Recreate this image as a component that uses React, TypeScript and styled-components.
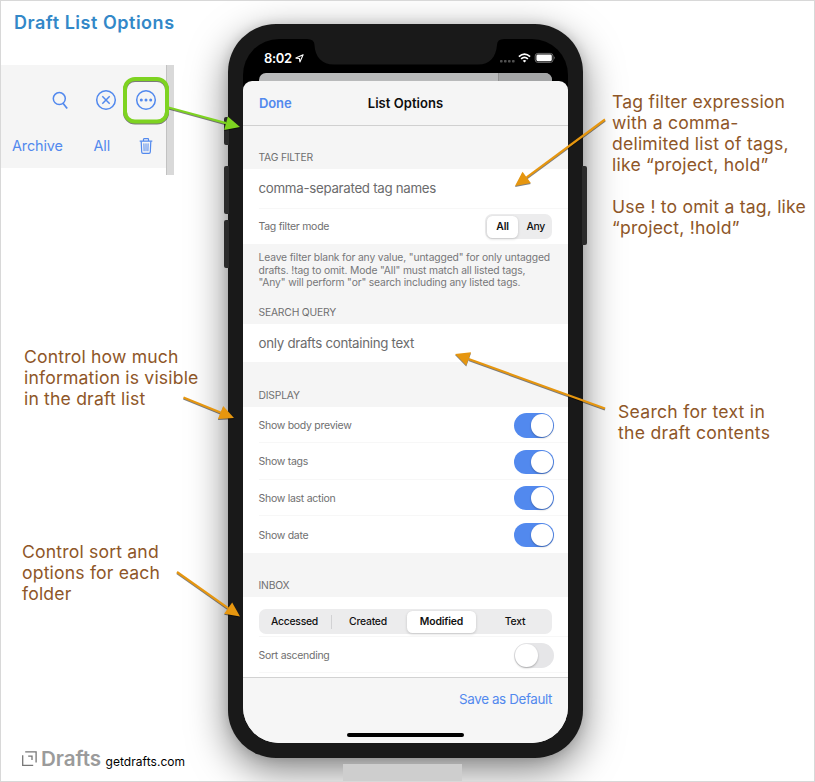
import React from "react";
import styled, { createGlobalStyle, css } from "styled-components";

const GlobalStyle = createGlobalStyle`
  *, *::before, *::after { box-sizing: border-box; }
  body { margin: 0; background: #fff; font-family: Inter, "Liberation Sans", sans-serif; }
`;

const BLUE = "#5289ee";
const ORANGE = "#e6960f";
const GREEN = "#7ed321";

const Canvas = styled.main`
  position: relative;
  display: grid;
  grid-template-columns: 227px 355px 1fr;
  width: 815px;
  height: 782px;
  overflow: hidden;
  border: 1px solid #d8d8d8;
  background: #fff;
`;

const LeftColumn = styled.section`
  display: flex;
  flex-direction: column;
  position: relative;
  z-index: 1;
`;

const RightColumn = styled.section`
  display: flex;
  flex-direction: column;
  position: relative;
  z-index: 1;
`;

const Title = styled.h1`
  margin: 10px 0 0 13px;
  font-size: 18px;
  line-height: 24px;
  font-weight: 600;
  letter-spacing: 0.52px;
  color: #3388c8;
  white-space: nowrap;
`;

const ToolbarClip = styled.div`
  display: flex;
  margin-top: 30px;
  height: 110px;
`;

const ToolbarPanel = styled.div`
  width: 165px;
  height: 103px;
  background: #f5f5f5;
`;

const ToolbarEdge = styled.div`
  width: 8px;
  background: #d9d9d9;
  border-left: 1px solid #c2c2c2;
`;

const IconRow = styled.div`
  display: flex;
  justify-content: flex-end;
  align-items: center;
  height: 70px;
  padding-right: 9px;
  gap: 18px;
`;

const SearchGlyph = styled.svg`
  margin: 1px 8px 0 0;
`;

const FilterRow = styled.div`
  display: flex;
  align-items: center;
  height: 20px;
  margin-top: 1px;
  padding-left: 11px;
  color: ${BLUE};
  font-size: 14.4px;
  line-height: 20px;
  letter-spacing: -0.1px;
`;

const FilterName = styled.span<{ $width: number }>`
  width: ${(p) => p.$width}px;
  white-space: nowrap;
`;

const Note = styled.p<{ $top: number; $left: number; $spacing?: number }>`
  margin: ${(p) => p.$top}px 0 0 ${(p) => p.$left}px;
  color: #8e5628;
  font-size: 17.6px;
  line-height: 21px;
  letter-spacing: ${(p) => p.$spacing ?? 0.17}px;
  white-space: pre;
`;

const Brand = styled.footer`
  display: flex;
  align-items: baseline;
  margin: 143px 0 0 21px;
  height: 24px;
  white-space: nowrap;
`;

const BrandName = styled.strong`
  margin-left: 4px;
  font-size: 20.6px;
  line-height: 24px;
  font-weight: 600;
  letter-spacing: -0.05px;
  color: #9b9b9b;
`;

const BrandUrl = styled.span`
  margin-left: 4.5px;
  font-size: 12px;
  letter-spacing: 0.05px;
  color: #000;
`;

const PhoneColumn = styled.section`
  position: relative;
  padding-top: 22.5px;
`;

const Phone = styled.div`
  position: relative;
  width: 355px;
  height: 734px;
  padding: 15.5px 15px 15px;
  border-radius: 48px;
  background: #191919;
  box-shadow: 0 12px 38px rgba(0, 0, 0, 0.5), 0 0 12px rgba(0, 0, 0, 0.12);
`;

const SideButton = styled.i<{ $side: "left" | "right"; $top: number; $height: number }>`
  position: absolute;
  top: ${(p) => p.$top}px;
  ${(p) => p.$side}: -4px;
  width: 5px;
  height: ${(p) => p.$height}px;
  background: #2b2b2b;
  border-radius: ${(p) => (p.$side === "left" ? "2px 0 0 2px" : "0 2px 2px 0")};
`;

const Screen = styled.div`
  display: flex;
  flex-direction: column;
  width: 325px;
  height: 703.5px;
  overflow: hidden;
  border-radius: 36px;
  background: #000;
`;

const StatusBar = styled.div`
  display: flex;
  flex: none;
  height: 34px;
  justify-content: space-between;
  align-items: flex-start;
  position: relative;
`;

const StatusTime = styled.div`
  display: flex;
  align-items: center;
  gap: 3.5px;
  height: 38px;
  padding-left: 21px;
  color: #fff;
  font-size: 13px;
  font-weight: 600;
  letter-spacing: -0.35px;
`;

const StatusIcons = styled.div`
  display: flex;
  padding: 13px 12.5px 0 0;
`;

const NotchShape = styled.svg`
  position: absolute;
  left: 64px;
  top: -1px;
`;

const BackSheet = styled.div`
  display: flex;
  flex: 0 0 8px;
  margin: 0 16px;
  border-radius: 7px 7px 0 0;
  overflow: hidden;
  background: #b9babb;
  justify-content: flex-end;
`;

const BackSheetPane = styled.div`
  width: 54px;
  background: #a4a5a6;
  border-left: 1px solid #929292;
`;

const Sheet = styled.div`
  display: flex;
  flex-direction: column;
  flex: 1;
  border-radius: 9px 9px 0 0;
  overflow: hidden;
  background: #f5f5f5;

  & > * {
    flex-shrink: 0;
  }
`;

const SheetHeader = styled.header`
  display: grid;
  grid-template-columns: 1fr auto 1fr;
  align-items: center;
  height: 45px;
  padding: 0 16px;
  border-bottom: 1px solid #d0d0d0;
`;

const DoneButton = styled.span`
  color: ${BLUE};
  font-size: 13px;
  font-weight: 600;
  letter-spacing: -0.1px;
`;

const SheetTitle = styled.span`
  color: #0d0d0d;
  font-size: 13px;
  font-weight: 600;
  letter-spacing: 0.05px;
`;

const GroupLabel = styled.div<{ $height: number; $pad?: number }>`
  display: flex;
  align-items: flex-end;
  height: ${(p) => p.$height}px;
  padding: 0 15.5px ${(p) => p.$pad ?? 5}px;
  color: #6f6f70;
  font-size: 10.3px;
  line-height: 14px;
  letter-spacing: -0.18px;
`;

const Group = styled.div`
  background: #fff;
`;

const Row = styled.div<{ $height: number; $divided?: boolean; $right?: number; $drop?: number }>`
  display: flex;
  align-items: center;
  justify-content: space-between;
  height: ${(p) => p.$height}px;
  margin-left: 15.5px;
  padding-top: ${(p) => p.$drop ?? 0}px;
  padding-right: ${(p) => p.$right ?? 14}px;
  ${(p) =>
    p.$divided &&
    css`
      border-bottom: 1px solid #f7f7f7;
    `}
`;

const RowLabel = styled.span`
  color: #6f6f70;
  font-size: 10.5px;
  letter-spacing: -0.28px;
`;

const Placeholder = styled.span`
  color: #6b6b6c;
  font-size: 13.3px;
  letter-spacing: -0.29px;
`;

const Hint = styled.p`
  margin: 0;
  height: 54.5px;
  padding: 7px 0 0 15.5px;
  color: #777779;
  font-size: 10.3px;
  line-height: 12.6px;
  letter-spacing: -0.14px;
  white-space: pre;
`;

const Segments = styled.div<{ $width: number }>`
  display: flex;
  align-items: center;
  width: ${(p) => p.$width}px;
  height: 25px;
  padding: 1.5px;
  border-radius: 7px;
  background: #ececed;
`;

const Segment = styled.span<{ $on?: boolean; $ruled?: boolean; $width: number; $shift?: number }>`
  position: relative;
  display: flex;
  width: ${(p) => p.$width}px;
  padding-left: ${(p) => Math.max(p.$shift ?? 0, 0)}px;
  padding-right: ${(p) => Math.max(-(p.$shift ?? 0), 0)}px;
  align-items: center;
  justify-content: center;
  height: 22px;
  border-radius: 5.5px;
  color: #111;
  font-size: 10.4px;
  font-weight: ${(p) => (p.$on ? 600 : 500)};
  letter-spacing: ${(p) => (p.$on ? -0.15 : -0.25)}px;
  ${(p) =>
    p.$on &&
    css`
      background: #fff;
      box-shadow: 0 1px 3px rgba(0, 0, 0, 0.18);
    `}
  ${(p) =>
    p.$ruled &&
    css`
      &::after {
        content: "";
        position: absolute;
        right: 0;
        top: 4px;
        width: 1px;
        height: 14px;
        background: #d2d2d4;
      }
    `}
`;

const Switch = styled.span<{ $on: boolean }>`
  display: flex;
  justify-content: ${(p) => (p.$on ? "flex-end" : "flex-start")};
  width: 40px;
  height: 24.5px;
  padding: 1px;
  border-radius: 13px;
  background: ${(p) => (p.$on ? BLUE : "#e6e6e8")};
`;

const Knob = styled.i`
  width: 22.5px;
  height: 22.5px;
  border-radius: 50%;
  background: #fff;
  box-shadow: 0 1px 2px rgba(0, 0, 0, 0.28);
`;

const SegmentHolder = styled.div`
  height: 39.5px;
  padding-top: 12px;
  margin-left: 15.5px;
  border-bottom: 1px solid #f7f7f7;
`;

const BottomBar = styled.footer`
  display: flex;
  flex: 1;
  flex-direction: column;
  border-top: 1px solid #d2d2d2;
  background: #f6f6f6;
`;

const SaveDefault = styled.span`
  align-self: flex-end;
  margin: 10px 16px 0 0;
  color: ${BLUE};
  font-size: 13.4px;
  line-height: 22px;
  letter-spacing: -0.38px;
`;

const HomeIndicator = styled.i`
  align-self: center;
  margin-top: 23px;
  width: 117px;
  height: 4px;
  border-radius: 2px;
  background: #000;
`;

const Stand = styled.div`
  width: 119px;
  height: 20px;
  margin: 6.5px 0 0 115px;
  position: relative;
  background: #cecece;
`;

const Overlay = styled.svg`
  position: absolute;
  left: -1px;
  top: -1px;
  z-index: 3;
  pointer-events: none;
  filter: drop-shadow(0 1px 0.7px rgba(0, 0, 0, 0.5));
`;

type Point = [number, number];

function Arrow({ from, to, color }: { from: Point; to: Point; color: string }) {
  const dx = to[0] - from[0];
  const dy = to[1] - from[1];
  const len = Math.hypot(dx, dy);
  const ux = dx / len;
  const uy = dy / len;
  const bx = to[0] - ux * 14.5;
  const by = to[1] - uy * 14.5;
  const half = 7;
  const points = [
    `${to[0]},${to[1]}`,
    `${bx - uy * half},${by + ux * half}`,
    `${bx + uy * half},${by - ux * half}`,
  ].join(" ");
  return (
    <g>
      <line x1={from[0]} y1={from[1]} x2={bx} y2={by} stroke={color} strokeWidth="2.2" />
      <polygon points={points} fill={color} />
    </g>
  );
}

const SearchIcon = () => (
  <SearchGlyph width="17" height="19" viewBox="0 0 17 19" fill="none" stroke={BLUE} strokeWidth="1.5">
    <circle cx="7.3" cy="7.6" r="6" />
    <path d="M11 12.2 L15.2 17.6" strokeWidth="1.7" />
  </SearchGlyph>
);

const ClearIcon = () => (
  <svg width="22" height="22" viewBox="0 0 22 22" fill="none" stroke={BLUE} strokeWidth="1.5">
    <circle cx="11" cy="11" r="9.3" />
    <path d="M7.3 7.3 L14.7 14.7 M14.7 7.3 L7.3 14.7" />
  </svg>
);

const MoreIcon = () => (
  <svg width="22" height="22" viewBox="0 0 22 22" fill="none" stroke={BLUE} strokeWidth="1.5">
    <circle cx="11" cy="11" r="9.3" />
    <g fill={BLUE} stroke="none">
      <circle cx="6.3" cy="11" r="1.5" />
      <circle cx="11" cy="11" r="1.5" />
      <circle cx="15.7" cy="11" r="1.5" />
    </g>
  </svg>
);

const TrashIcon = () => (
  <svg width="14" height="16" viewBox="0 0 14 16" fill="none" stroke={BLUE} strokeWidth="1.2">
    <path d="M0.7 3.2 H13.3 M4.5 3 V1.3 Q4.5 0.7 5.1 0.7 H8.9 Q9.5 0.7 9.5 1.3 V3" />
    <path d="M2.2 3.4 L2.7 14 Q2.8 15.3 4 15.3 H10 Q11.2 15.3 11.3 14 L11.8 3.4" />
    <path d="M4.9 5.4 L5.1 13.2 M7 5.4 V13.2 M9.1 5.4 L8.9 13.2" strokeWidth="1" />
  </svg>
);

const DraftsLogo = () => (
  <svg width="15" height="15" viewBox="0 0 15 15" fill="none" stroke="#777" strokeWidth="1.3">
    <path d="M0.7 4.3 V14.3 H11.2 M3.2 0.9 H14.1 V11.5" />
    <path d="M6.2 5.2 H10 V9" />
  </svg>
);

const LocationIcon = () => (
  <svg width="9" height="9" viewBox="0 0 9 9" fill="none" stroke="#fff" strokeWidth="1.1">
    <path d="M8.1 0.8 L0.9 4.1 L4.4 4.5 L4.9 8 Z" strokeLinejoin="round" />
  </svg>
);

const StatusGlyphs = () => (
  <svg width="56" height="12" viewBox="0 0 56 12" fill="none">
    <g fill="#505050">
      <rect x="0" y="8" width="2.6" height="2.4" rx="0.7" />
      <rect x="4" y="8" width="2.6" height="2.4" rx="0.7" />
      <rect x="8" y="8" width="2.6" height="2.4" rx="0.7" />
      <rect x="12" y="8" width="2.6" height="2.4" rx="0.7" />
    </g>
    <g stroke="#fff" strokeWidth="1.7">
      <path d="M18.9 4.7 Q24.5 -0.6 30.1 4.7" />
      <path d="M21.1 6.9 Q24.5 3.8 27.9 6.9" />
    </g>
    <path d="M24.5 10.6 L22.7 8.8 Q24.5 7.4 26.3 8.8 Z" fill="#fff" />
    <rect x="35.2" y="1.4" width="17.8" height="9" rx="2.6" stroke="#777" strokeWidth="0.9" />
    <rect x="36.4" y="2.6" width="15.4" height="6.6" rx="1.4" fill="#fff" />
    <path d="M54.2 4.3 Q55.6 5.9 54.2 7.5 Z" fill="#888" />
  </svg>
);

const Notch = () => (
  <NotchShape width="197" height="27" viewBox="0 0 197 27">
    <path
      d="M0 0 H197 V1 Q190 1 190 7 C189 19 183 26.6 171 26.6 H27 C15 26.6 8 19 7.5 7 Q7.5 1 0 1 Z"
      fill="#191919"
    />
  </NotchShape>
);

const DISPLAY_OPTIONS = ["Show body preview", "Show tags", "Show last action", "Show date"];

export default function App() {
  return (
    <>
      <GlobalStyle />
      <Canvas>
        <LeftColumn>
          <Title>Draft List Options</Title>
          <ToolbarClip>
            <ToolbarPanel>
              <IconRow>
                <SearchIcon />
                <ClearIcon />
                <MoreIcon />
              </IconRow>
              <FilterRow>
                <FilterName $width={81.5}>Archive</FilterName>
                <FilterName $width={45.5}>All</FilterName>
                <TrashIcon />
              </FilterRow>
            </ToolbarPanel>
            <ToolbarEdge />
          </ToolbarClip>
          <Note $top={171} $left={23}>
            {"Control how much\ninformation is visible\nin the draft list"}
          </Note>
          <Note $top={132} $left={21}>
            {"Control sort and\noptions for each\nfolder"}
          </Note>
          <Brand>
            <DraftsLogo />
            <BrandName>Drafts</BrandName>
            <BrandUrl>getdrafts.com</BrandUrl>
          </Brand>
        </LeftColumn>

        <PhoneColumn>
          <Phone>
            <SideButton $side="left" $top={93} $height={28} />
            <SideButton $side="left" $top={142.5} $height={48} />
            <SideButton $side="left" $top={196.5} $height={48} />
            <SideButton $side="right" $top={142.5} $height={79} />
            <Screen>
              <StatusBar>
                <StatusTime>
                  8:02 <LocationIcon />
                </StatusTime>
                <Notch />
                <StatusIcons>
                  <StatusGlyphs />
                </StatusIcons>
              </StatusBar>
              <BackSheet>
                <BackSheetPane />
              </BackSheet>
              <Sheet>
                <SheetHeader>
                  <DoneButton>Done</DoneButton>
                  <SheetTitle>List Options</SheetTitle>
                </SheetHeader>
                <GroupLabel $height={43}>TAG FILTER</GroupLabel>
                <Group>
                  <Row $height={39.5} $divided>
                    <Placeholder>comma-separated tag names</Placeholder>
                  </Row>
                  <Row $height={35.5} $right={16} $drop={1}>
                    <RowLabel>Tag filter mode</RowLabel>
                    <Segments $width={67}>
                      <Segment $width={31} $shift={1} $on>All</Segment>
                      <Segment $width={33} $shift={3.5}>Any</Segment>
                    </Segments>
                  </Row>
                </Group>
                <Hint>
                  {
                    'Leave filter blank for any value, "untagged" for only untagged\ndrafts. !tag to omit. Mode "All" must match all listed tags,\n"Any" will perform "or" search including any listed tags.'
                  }
                </Hint>
                <GroupLabel $height={25}>SEARCH QUERY</GroupLabel>
                <Group>
                  <Row $height={38.5}>
                    <Placeholder>only drafts containing text</Placeholder>
                  </Row>
                </Group>
                <GroupLabel $height={45}>DISPLAY</GroupLabel>
                <Group>
                  {DISPLAY_OPTIONS.map((name, i) => (
                    <Row key={name} $height={36.4} $drop={1.5} $divided={i < DISPLAY_OPTIONS.length - 1}>
                      <RowLabel>{name}</RowLabel>
                      <Switch $on>
                        <Knob />
                      </Switch>
                    </Row>
                  ))}
                </Group>
                <GroupLabel $height={44.5}>INBOX</GroupLabel>
                <Group>
                  <SegmentHolder>
                    <Segments $width={293.5}>
                      <Segment $width={72} $shift={-3} $ruled>Accessed</Segment>
                      <Segment $width={75} $shift={-3}>Created</Segment>
                      <Segment $width={69} $on>Modified</Segment>
                      <Segment $width={74.5} $shift={3.5}>Text</Segment>
                    </Segments>
                  </SegmentHolder>
                  <Row $height={36.5} $drop={2.5} $divided>
                    <RowLabel>Sort ascending</RowLabel>
                    <Switch $on={false}>
                      <Knob />
                    </Switch>
                  </Row>
                  <Row $height={4} />
                </Group>
                <BottomBar>
                  <SaveDefault>Save as Default</SaveDefault>
                  <HomeIndicator />
                </BottomBar>
              </Sheet>
            </Screen>
          </Phone>
          <Stand />
        </PhoneColumn>

        <RightColumn>
          <Note $top={90} $left={29} $spacing={0.2}>
            {"Tag filter expression\nwith a comma-\ndelimited list of tags,\nlike “project, hold”\n\nUse ! to omit a tag, like\n“project, !hold”"}
          </Note>
          <Note $top={163} $left={35} $spacing={0.27}>
            {"Search for text in\nthe draft contents"}
          </Note>
        </RightColumn>

        <Overlay width="815" height="782" viewBox="0 0 815 782">
          <rect x="125" y="79" width="42" height="42.5" rx="10" fill="none" stroke={GREEN} strokeWidth="4" />
          <Arrow from={[168.5, 107.5]} to={[240, 127]} color={GREEN} />
          <Arrow from={[605, 119.5]} to={[515, 186]} color={ORANGE} />
          <Arrow from={[605, 408.5]} to={[455, 354]} color={ORANGE} />
          <Arrow from={[183.5, 397.5]} to={[234, 418]} color={ORANGE} />
          <Arrow from={[177, 572]} to={[240, 616.5]} color={ORANGE} />
        </Overlay>
      </Canvas>
    </>
  );
}
